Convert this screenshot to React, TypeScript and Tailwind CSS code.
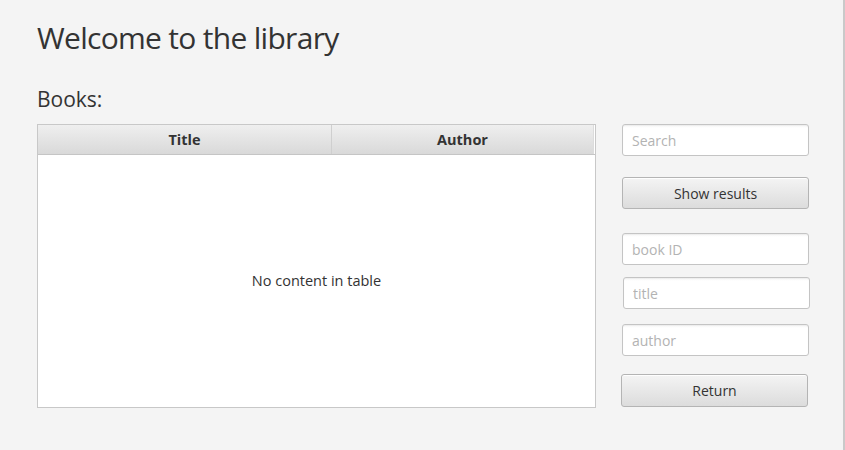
export default function App() {
  const font = { fontFamily: '"Open Sans", "Noto Sans", sans-serif' }

  const field =
    'h-[32px] w-[187px] rounded-[3px] border border-[#c4c4c4] bg-white bg-gradient-to-b from-[#f6f6f6] via-white via-[3px] to-white px-[9px] text-[14px] text-[#333] placeholder:text-[#b3b3b3] outline-none shadow-[inset_0_1px_1px_rgba(0,0,0,0.04)]'
  const button =
    'h-[32px] w-[187px] rounded-[3px] border border-[#b4b4b4] bg-gradient-to-b from-[#f4f4f4] to-[#dcdcdc] text-[14px] text-[#333] shadow-[inset_0_1px_0_rgba(255,255,255,0.9)]'

  return (
    <div
      className="h-[450px] w-[845px] border-r-2 border-[#c9c9c9] bg-[#f4f4f4] pl-[37px] pt-[18px] text-[#333]"
      style={font}
    >
      <h1 className="text-[30px] leading-[40px] tracking-[-0.7px]">Welcome to the library</h1>
      <h2 className="mt-[29px] text-[21px] leading-[24px]">Books:</h2>

      <div className="mt-[13px] flex">
        {/* table */}
        <div className="flex h-[284px] w-[559px] flex-col border border-[#c8c8c8] bg-white">
          <div className="flex h-[30px] border-b border-[#c5c5c5] bg-white">
            <div className="flex w-[294px] items-center justify-center border-r border-[#cfcfcf] bg-gradient-to-b from-[#efefef] to-[#d9d9d9] text-[14.5px] font-bold">
              Title
            </div>
            <div className="flex w-[262px] items-center justify-center border-r border-[#dcdcdc] bg-gradient-to-b from-[#efefef] to-[#d9d9d9] text-[14.5px] font-bold">
              Author
            </div>
          </div>
          <div className="flex flex-1 items-center justify-center text-[14.5px]">No content in table</div>
        </div>

        {/* side controls */}
        <div className="ml-[26px] flex flex-col">
          <input className={field} placeholder="Search" />
          <button className={`${button} mt-[21px]`}>Show results</button>
          <input className={`${field} mt-[24px]`} placeholder="book ID" />
          <input className={`${field} ml-[1px] mt-[12px] h-[31px]`} placeholder="title" />
          <input className={`${field} mt-[15px]`} placeholder="author" />
          <button className={`${button} -ml-[1px] mt-[18px] h-[33px]`}>Return</button>
        </div>
      </div>
    </div>
  )
}
